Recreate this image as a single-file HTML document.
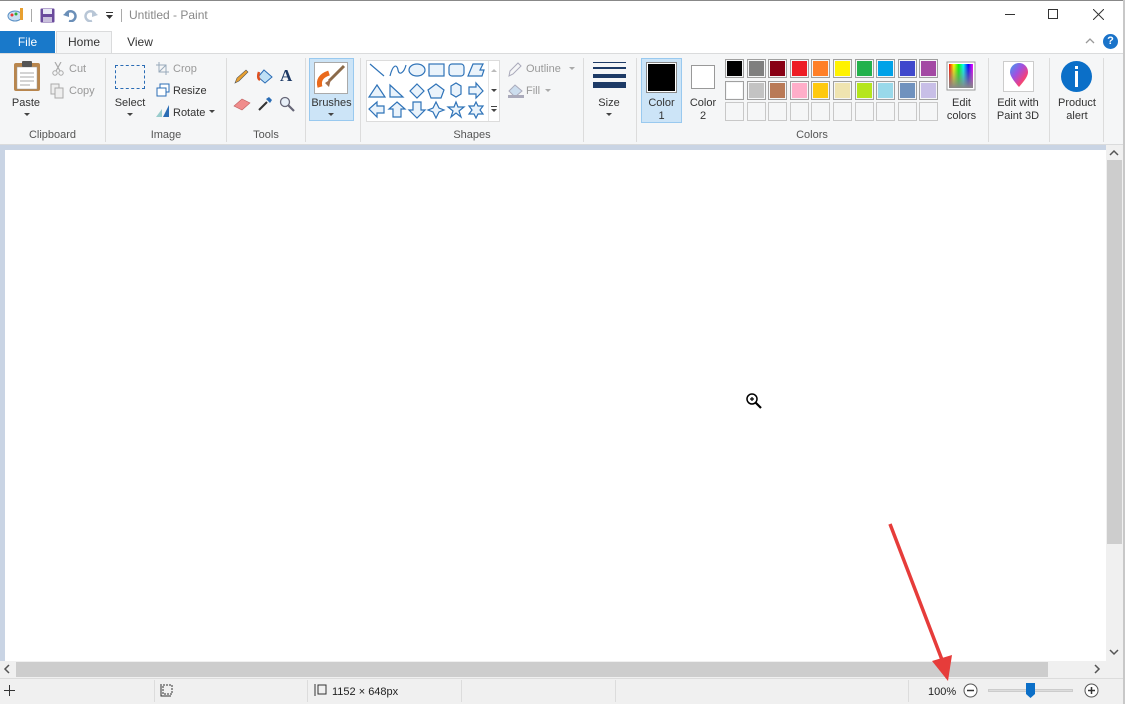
<!DOCTYPE html>
<html><head><meta charset="utf-8"><style>
*{margin:0;padding:0;box-sizing:border-box}
body{width:1125px;height:704px;overflow:hidden;background:#fff;font-family:"Liberation Sans",sans-serif;font-size:11px;color:#333;position:relative}
.a{position:absolute}
.lbl{position:absolute;font-size:11px;color:#333;text-align:center}
.grp{position:absolute;top:129px;font-size:11px;color:#555;text-align:center}
.sep{position:absolute;top:58px;width:1px;height:84px;background:#dcdcdc}
.sw{position:absolute;width:19px;height:19px;border:1px solid #a0a0a0;}
.sw i{position:absolute;left:1px;top:1px;right:1px;bottom:1px;display:block}
</style></head><body>
<div class="a" style="left:0;top:0;width:1125px;height:30px;background:#fff;border-top:1px solid #888"></div>
<svg class="a" style="left:7px;top:7px" width="18" height="16"><ellipse cx="8" cy="9" rx="7" ry="5" fill="#c9dff2" stroke="#5a8fc4"/><circle cx="5" cy="8" r="1.5" fill="#e33"/><circle cx="9" cy="7" r="1.5" fill="#3a3"/><rect x="13" y="1" width="3" height="12" fill="#e8a030"/></svg>
<div class="a" style="left:31px;top:9px;width:1px;height:13px;background:#aaa"></div>
<svg class="a" style="left:40px;top:8px" width="15" height="15"><rect x="0.5" y="0.5" width="14" height="14" rx="1" fill="#6a4a9c"/><rect x="3" y="1" width="9" height="5" fill="#e8e8f4"/><rect x="3" y="9" width="9" height="5" fill="#c9c0dc"/></svg>
<svg class="a" style="left:63px;top:8px" width="14" height="14"><path d="M3 6 A5 5 0 1 1 6 13" stroke="#6b8fb8" stroke-width="2.5" fill="none"/><path d="M0 7 L6 2 L6 9Z" fill="#6b8fb8"/></svg>
<svg class="a" style="left:84px;top:8px" width="14" height="14"><path d="M11 6 A5 5 0 1 0 8 13" stroke="#b8c6d6" stroke-width="2.5" fill="none"/><path d="M14 7 L8 2 L8 9Z" fill="#b8c6d6"/></svg>
<svg class="a" style="left:106px;top:12px" width="8" height="8"><rect x="0" y="0" width="7" height="1" fill="#333"/><path d="M0 3 L7 3 L3.5 7Z" fill="#333"/></svg>
<div class="a" style="left:121px;top:9px;width:1px;height:13px;background:#aaa"></div>
<div class="a" style="left:129px;top:8px;font-size:12px;color:#888">Untitled - Paint</div>
<div class="a" style="left:1005px;top:14px;width:10px;height:1px;background:#333"></div>
<div class="a" style="left:1048px;top:9px;width:10px;height:10px;border:1px solid #333"></div>
<svg class="a" style="left:1093px;top:9px" width="11" height="11"><path d="M0 0L11 11M11 0L0 11" stroke="#333" stroke-width="1"/></svg>
<div class="a" style="left:0;top:30px;width:1125px;height:23px;background:#fff"></div>
<div class="a" style="left:0;top:31px;width:55px;height:22px;background:#1979ca;color:#fff;font-size:12px;text-align:center;line-height:22px">File</div>
<div class="a" style="left:56px;top:31px;width:56px;height:23px;background:#f5f6f7;border:1px solid #dadbdc;border-bottom:none;font-size:12px;text-align:center;line-height:21px;color:#333">Home</div>
<div class="a" style="left:112px;top:31px;width:56px;height:22px;font-size:12px;text-align:center;line-height:22px;color:#333">View</div>
<svg class="a" style="left:1085px;top:37px" width="10" height="7"><path d="M1 6L5 2L9 6" stroke="#999" fill="none" stroke-width="1.3"/></svg>
<div class="a" style="left:1103px;top:34px;width:15px;height:15px;border-radius:50%;background:#1a73c9;color:#fff;font-weight:bold;font-size:11px;text-align:center;line-height:15px">?</div>
<div class="a" style="left:0;top:53px;width:1123px;height:92px;background:#f5f6f7;border-top:1px solid #dadbdc;border-bottom:1px solid #dadbdc"></div>
<div class="a" style="left:1123px;top:0;width:2px;height:704px;background:#c8c8c8"></div>
<svg class="a" style="left:12px;top:60px" width="30" height="32"><rect x="2" y="3" width="26" height="28" rx="2" fill="#b9864d"/><rect x="5" y="7" width="20" height="22" fill="#fff" stroke="#999" stroke-width=".5"/><rect x="10" y="1" width="10" height="6" rx="1" fill="#555"/><path d="M8 13h14M8 17h14M8 21h14M8 25h10" stroke="#aaa"/></svg>
<div class="lbl" style="left:8px;top:97px;width:36px">Paste</div>
<div class="a" style="left:24px;top:113px;border:3px solid transparent;border-top:3px solid #444"></div>
<svg class="a" style="left:52px;top:62px" width="12" height="14"><path d="M3 0L8 9M9 0L4 9" stroke="#aaa" stroke-width="1.2"/><circle cx="3" cy="11" r="2.2" fill="none" stroke="#aaa"/><circle cx="9" cy="11" r="2.2" fill="none" stroke="#aaa"/></svg>
<div class="a" style="left:69px;top:63px;color:#999">Cut</div>
<svg class="a" style="left:50px;top:83px" width="15" height="16"><rect x="1" y="1" width="8" height="10" fill="#eee" stroke="#aaa"/><rect x="5" y="5" width="8" height="10" fill="#eee" stroke="#aaa"/></svg>
<div class="a" style="left:69px;top:85px;color:#999">Copy</div>
<div class="grp" style="left:0;width:105px">Clipboard</div>
<div class="sep" style="left:105px"></div>
<div class="a" style="left:115px;top:65px;width:30px;height:24px;border:1px dashed #2a6cb5"></div>
<div class="lbl" style="left:110px;top:97px;width:40px">Select</div>
<div class="a" style="left:127px;top:113px;border:3px solid transparent;border-top:3px solid #444"></div>
<svg class="a" style="left:156px;top:62px" width="13" height="13"><path d="M3 0v10h10M0 3h10v10" stroke="#9ab" fill="none"/><path d="M3 10L10 3" stroke="#9ab"/></svg>
<div class="a" style="left:173px;top:63px;color:#999">Crop</div>
<svg class="a" style="left:156px;top:83px" width="14" height="14"><rect x="4" y="1" width="9" height="8" fill="#fff" stroke="#2a6cb5"/><rect x="1" y="5" width="9" height="8" fill="#fff" stroke="#2a6cb5"/></svg>
<div class="a" style="left:173px;top:85px">Resize</div>
<svg class="a" style="left:155px;top:104px" width="16" height="14"><path d="M8 13L14 1V13Z" fill="#2a6cb5"/><path d="M1 13L7 5V13Z" fill="#9cc"/></svg>
<div class="a" style="left:173px;top:107px">Rotate</div>
<div class="a" style="left:209px;top:110px;border:3px solid transparent;border-top:3px solid #444"></div>
<div class="grp" style="left:106px;width:120px">Image</div>
<div class="sep" style="left:226px"></div>
<svg class="a" style="left:233px;top:69px" width="16" height="16"><path d="M2 14L4 9L13 1L15 3L6 12Z" fill="#e8a030" stroke="#555" stroke-width=".6"/></svg>
<svg class="a" style="left:256px;top:68px" width="18" height="16"><path d="M8 2L16 9L9 15L2 9Z" fill="#bfe0f5" stroke="#2a6cb5"/><path d="M3 4Q1 10 4 12" stroke="#e05020" stroke-width="2.5" fill="none"/></svg>
<div class="a" style="left:280px;top:66px;font-family:'Liberation Serif',serif;font-weight:bold;font-size:17px;color:#1d3a66">A</div>
<svg class="a" style="left:233px;top:97px" width="18" height="14"><path d="M1 9L9 2L17 6L9 13Z" fill="#f08c8c" stroke="#c06060" stroke-width=".6"/></svg>
<svg class="a" style="left:257px;top:96px" width="16" height="16"><path d="M2 14L10 6" stroke="#333" stroke-width="2"/><path d="M9 3L13 7L15 4L12 1Z" fill="#2a6cb5"/></svg>
<svg class="a" style="left:279px;top:96px" width="16" height="16"><circle cx="6" cy="6" r="4.5" fill="#e8f0f8" stroke="#667" stroke-width="1.3"/><path d="M9 9L15 15" stroke="#667" stroke-width="2.2"/></svg>
<div class="grp" style="left:227px;width:78px">Tools</div>
<div class="sep" style="left:305px"></div>
<div class="a" style="left:309px;top:58px;width:45px;height:63px;background:#cce4f7;border:1px solid #99c9ef"></div>
<div class="a" style="left:314px;top:62px;width:34px;height:32px;background:#fff;border:1px solid #aaa"></div>
<svg class="a" style="left:315px;top:63px" width="32" height="30"><path d="M5 24Q2 14 14 10" stroke="#ea6a1c" stroke-width="5" fill="none"/><path d="M14 18L29 3" stroke="#8a6a4a" stroke-width="3"/><path d="M10 20L16 16L14 24Z" fill="#a07050"/></svg>
<div class="lbl" style="left:309px;top:97px;width:45px">Brushes</div>
<div class="a" style="left:328px;top:113px;border:3px solid transparent;border-top:3px solid #444"></div>
<div class="sep" style="left:360px"></div>
<div class="a" style="left:366px;top:60px;width:134px;height:62px;background:#fff;border:1px solid #dcdcdc"></div>
<div class="a" style="left:488px;top:61px;width:1px;height:60px;background:#e4e4e4"></div>
<svg class="a" style="left:367px;top:61px" width="121" height="60" fill="#eaf3fb" stroke="#2f73b8" stroke-width="1.2">
<path d="M3 3L17 15" fill="none"/>
<path d="M23 15C26 3 30 3 31 9S37 12 39 4" fill="none"/>
<ellipse cx="50" cy="9" rx="8" ry="6"/>
<rect x="62" y="3" width="15" height="12"/>
<rect x="82" y="3" width="15" height="12" rx="3"/>
<path d="M106 3H116L113 9H117L115 15H101Z"/>
<path d="M10 24L18 36H2Z"/>
<path d="M23 24L36 36H23Z"/>
<path d="M50 23L57 30L50 37L43 30Z"/>
<path d="M69 23L77 29L74 37H64L61 29Z"/>
<path d="M84 25L89 22L94 25V33L89 36L84 33Z"/>
<path d="M102 26H109V22L116 30L109 37V33H102Z"/>
<path d="M17 45H10V41L2 48L10 56V52H17Z"/>
<path d="M30 41L38 48H34V56H26V48H22Z"/>
<path d="M46 41H54V49H58L50 57L42 49H46Z"/>
<path d="M69 41L72 47L77 49L72 51L69 57L66 51L61 49L66 47Z"/>
<path d="M89 41L91 46H97L92 50L94 56L89 52L84 56L86 50L81 46H87Z"/>
<path d="M109 41L111 45H116L113 49L116 53H111L109 57L107 53H102L105 49L102 45H107Z"/>
</svg>
<svg class="a" style="left:489px;top:66px" width="10" height="54"><path d="M2 6L5 3L8 6Z" fill="#bbb"/><path d="M2 23L5 26L8 23Z" fill="#444"/><rect x="2" y="40" width="6" height="1" fill="#444"/><path d="M2 43L5 46L8 43Z" fill="#444"/></svg>
<svg class="a" style="left:507px;top:62px" width="16" height="16"><path d="M2 14L3 9L11 1L14 4L6 12Z" fill="none" stroke="#aab"/></svg>
<div class="a" style="left:526px;top:63px;color:#999">Outline</div>
<div class="a" style="left:569px;top:67px;border:3px solid transparent;border-top:3px solid #aaa"></div>
<svg class="a" style="left:507px;top:83px" width="18" height="16"><path d="M8 2L15 8L8 14L2 8Z" fill="#cde" stroke="#aab"/><rect x="1" y="12" width="16" height="3" fill="#aab"/></svg>
<div class="a" style="left:526px;top:85px;color:#999">Fill</div>
<div class="a" style="left:545px;top:89px;border:3px solid transparent;border-top:3px solid #aaa"></div>
<div class="grp" style="left:361px;width:222px">Shapes</div>
<div class="sep" style="left:583px"></div>
<div class="a" style="left:593px;top:62px;width:33px;height:1px;background:#1d3a66"></div>
<div class="a" style="left:593px;top:67px;width:33px;height:2px;background:#1d3a66"></div>
<div class="a" style="left:593px;top:74px;width:33px;height:4px;background:#1d3a66"></div>
<div class="a" style="left:593px;top:82px;width:33px;height:6px;background:#1d3a66"></div>
<div class="lbl" style="left:590px;top:97px;width:38px">Size</div>
<div class="a" style="left:606px;top:113px;border:3px solid transparent;border-top:3px solid #444"></div>
<div class="sep" style="left:636px"></div>
<div class="a" style="left:641px;top:58px;width:41px;height:65px;background:#cce4f7;border:1px solid #99c9ef"></div>
<div class="a" style="left:646px;top:62px;width:31px;height:31px;border:1px solid #888;background:#000;box-shadow:inset 0 0 0 1px #fff"></div>
<div class="lbl" style="left:641px;top:97px;width:41px;line-height:13px">Color<br>1</div>
<div class="a" style="left:691px;top:65px;width:24px;height:24px;border:1px solid #999;background:#fff"></div>
<div class="lbl" style="left:683px;top:97px;width:40px;line-height:13px">Color<br>2</div>
<div id="pal"></div>
<svg class="a" style="left:946px;top:61px" width="30" height="30"><defs><linearGradient id="rb" x1="0" x2="1"><stop offset="0" stop-color="#f00"/><stop offset=".2" stop-color="#ff0"/><stop offset=".4" stop-color="#0f0"/><stop offset=".6" stop-color="#0ff"/><stop offset=".8" stop-color="#00f"/><stop offset="1" stop-color="#f0f"/></linearGradient><linearGradient id="gy" x1="0" y1="0" x2="0" y2="1"><stop offset="0" stop-color="#888" stop-opacity="0"/><stop offset="1" stop-color="#888"/></linearGradient></defs><rect x="1" y="1" width="28" height="28" fill="#fff" stroke="#999"/><rect x="3" y="3" width="24" height="24" fill="url(#rb)"/><rect x="3" y="3" width="24" height="24" fill="url(#gy)"/></svg>
<div class="lbl" style="left:940px;top:97px;width:43px;line-height:13px">Edit<br>colors</div>
<div class="grp" style="left:637px;width:350px">Colors</div>
<div class="sep" style="left:988px"></div>
<div class="a" style="left:1003px;top:61px;width:31px;height:31px;background:#fff;border:1px solid #ccc"></div>
<svg class="a" style="left:1008px;top:63px" width="22" height="26"><defs><linearGradient id="p3" x1="0" y1="0" x2="1" y2="1"><stop offset="0" stop-color="#3aa0f0"/><stop offset=".4" stop-color="#a050e0"/><stop offset=".7" stop-color="#f04080"/><stop offset="1" stop-color="#f0a020"/></linearGradient></defs><path d="M11 24C4 16 2 12 2 9A9 9 0 0 1 20 9C20 13 17 17 11 24Z" fill="url(#p3)"/></svg>
<div class="lbl" style="left:992px;top:97px;width:52px;line-height:13px">Edit with<br>Paint 3D</div>
<div class="sep" style="left:1049px"></div>
<div class="a" style="left:1061px;top:61px;width:31px;height:31px;border-radius:50%;background:#0b6fc8"></div>
<div class="a" style="left:1075px;top:66px;width:3px;height:3px;background:#fff"></div>
<div class="a" style="left:1075px;top:71px;width:3px;height:16px;background:#fff"></div>
<div class="lbl" style="left:1052px;top:97px;width:50px;line-height:13px">Product<br>alert</div>
<div class="sep" style="left:1103px"></div>
<div class="a" style="left:0;top:145px;width:1106px;height:516px;background:#c9d4e4"></div>
<div class="a" style="left:5px;top:150px;width:1101px;height:511px;background:#fff"></div>
<svg class="a" style="left:745px;top:392px" width="18" height="18"><circle cx="7" cy="7" r="5" fill="#fff" stroke="#000" stroke-width="1.5"/><path d="M5 7h4M7 5v4" stroke="#000" stroke-width="1.2"/><path d="M10.5 10.5L16 16" stroke="#000" stroke-width="2.2"/></svg>
<div class="a" style="left:1106px;top:145px;width:17px;height:516px;background:#f0f0f0"></div>
<div class="a" style="left:1107px;top:160px;width:15px;height:384px;background:#cdcdcd"></div>
<svg class="a" style="left:1109px;top:149px" width="10" height="8"><path d="M1 6L5 2L9 6" stroke="#555" fill="none" stroke-width="1.5"/></svg>
<svg class="a" style="left:1109px;top:648px" width="10" height="8"><path d="M1 2L5 6L9 2" stroke="#555" fill="none" stroke-width="1.5"/></svg>
<div class="a" style="left:0;top:661px;width:1123px;height:17px;background:#f0f0f0"></div>
<div class="a" style="left:16px;top:662px;width:1032px;height:15px;background:#cdcdcd"></div>
<svg class="a" style="left:3px;top:664px" width="8" height="10"><path d="M6 1L2 5L6 9" stroke="#555" fill="none" stroke-width="1.5"/></svg>
<svg class="a" style="left:1093px;top:664px" width="8" height="10"><path d="M2 1L6 5L2 9" stroke="#555" fill="none" stroke-width="1.5"/></svg>
<div class="a" style="left:0;top:678px;width:1123px;height:26px;background:#f0f0f0;border-top:1px solid #dcdcdc"></div>
<div class="a" style="left:154px;top:680px;width:1px;height:22px;background:#dcdcdc"></div>
<div class="a" style="left:307px;top:680px;width:1px;height:22px;background:#dcdcdc"></div>
<div class="a" style="left:461px;top:680px;width:1px;height:22px;background:#dcdcdc"></div>
<div class="a" style="left:615px;top:680px;width:1px;height:22px;background:#dcdcdc"></div>
<div class="a" style="left:908px;top:680px;width:1px;height:22px;background:#dcdcdc"></div>
<svg class="a" style="left:4px;top:685px" width="11" height="11"><path d="M5.5 0v11M0 5.5h11" stroke="#333"/></svg>
<svg class="a" style="left:160px;top:684px" width="13" height="13"><rect x="3" y="1" width="9" height="9" fill="none" stroke="#333" stroke-dasharray="2 1"/><path d="M1 0v12h10" stroke="#333" fill="none"/></svg>
<svg class="a" style="left:314px;top:684px" width="13" height="13"><rect x="4" y="1" width="8" height="9" fill="none" stroke="#333"/><path d="M1 0v12" stroke="#333"/></svg>
<div class="a" style="left:332px;top:686px;font-size:11px;color:#222">1152 × 648px</div>
<div class="a" style="left:928px;top:686px;font-size:11px;color:#222">100%</div>
<svg class="a" style="left:963px;top:683px" width="15" height="15"><circle cx="7.5" cy="7.5" r="6.5" fill="#fff" stroke="#555"/><path d="M4 7.5h7" stroke="#333" stroke-width="1.5"/></svg>
<div class="a" style="left:988px;top:689px;width:85px;height:3px;background:#ddd;border:1px solid #ccc"></div>
<svg class="a" style="left:1025px;top:682px" width="11" height="17"><path d="M1 1h9v11l-4.5 4l-4.5-4Z" fill="#0b6fc8"/></svg>
<svg class="a" style="left:1084px;top:683px" width="15" height="15"><circle cx="7.5" cy="7.5" r="6.5" fill="#fff" stroke="#555"/><path d="M4 7.5h7M7.5 4v7" stroke="#333" stroke-width="1.5"/></svg>
<svg class="a" style="left:880px;top:515px" width="80" height="175"><path d="M10 9L64 150" stroke="#e63c3a" stroke-width="3.5"/><path d="M52 146L68 166L72 140Z" fill="#e63c3a"/></svg>
<script>
var c=[["#000","#7f7f7f","#880015","#ed1c24","#ff7f27","#fff200","#22b14c","#00a2e8","#3f48cc","#a349a4"],["#fff","#c3c3c3","#b97a57","#ffaec9","#ffc90e","#efe4b0","#b5e61d","#99d9ea","#7092be","#c8bfe7"],["","","","","","","","","",""]];
var h="";for(var r=0;r<3;r++)for(var i=0;i<10;i++){h+='<div class="sw" style="left:'+(725+i*21.6)+'px;top:'+(59+r*21.6)+'px;'+(r==2?'border-color:#c8c8c8;background:#f5f6f7':'')+'">'+(c[r][i]?'<i style="background:'+c[r][i]+'"></i>':'')+'</div>';}
document.getElementById("pal").innerHTML=h;
</script>
</body></html>
